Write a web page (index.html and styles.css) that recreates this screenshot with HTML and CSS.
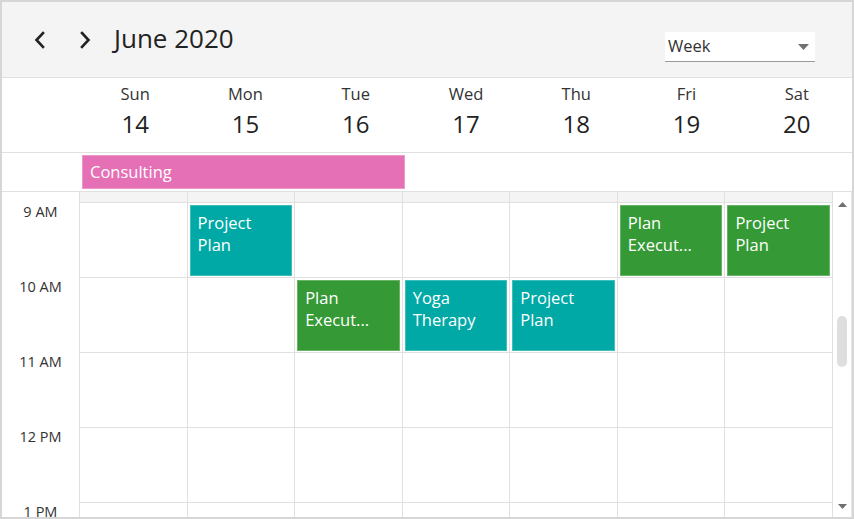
FILE: index.html
```html
<!DOCTYPE html>
<html>
<head>
<meta charset="utf-8">
<link rel="stylesheet" href="styles.css">
</head>
<body>
<div class="scheduler">
  <div class="toolbar">
    <button class="nav prev" aria-label="Previous">
      <svg width="14" height="18" viewBox="0 0 14 18"><path d="M10 2 L3.5 9 L10 16" fill="none" stroke="#222" stroke-width="2.6" stroke-linecap="square"/></svg>
    </button>
    <button class="nav next" aria-label="Next">
      <svg width="14" height="18" viewBox="0 0 14 18"><path d="M4 2 L10.5 9 L4 16" fill="none" stroke="#222" stroke-width="2.6" stroke-linecap="square"/></svg>
    </button>
    <div class="title">June 2020</div>
    <div class="spacer"></div>
    <div class="select">
      <span>Week</span>
      <svg class="caret" width="12" height="7" viewBox="0 0 12 7"><path d="M0 0 H11 L5.5 6 Z" fill="#707070"/></svg>
    </div>
  </div>

  <div class="dayhead">
    <div class="day"><div class="dname">Sun</div><div class="dnum">14</div></div>
    <div class="day"><div class="dname">Mon</div><div class="dnum">15</div></div>
    <div class="day"><div class="dname">Tue</div><div class="dnum">16</div></div>
    <div class="day"><div class="dname">Wed</div><div class="dnum">17</div></div>
    <div class="day"><div class="dname">Thu</div><div class="dnum">18</div></div>
    <div class="day"><div class="dname">Fri</div><div class="dnum">19</div></div>
    <div class="day"><div class="dname">Sat</div><div class="dnum">20</div></div>
  </div>

  <div class="allday">
    <div class="allday-event">Consulting</div>
  </div>

  <div class="body">
    <div class="times">
      <div class="strip-t"></div>
      <div class="tlabel">9 AM</div>
      <div class="tlabel">10 AM</div>
      <div class="tlabel">11 AM</div>
      <div class="tlabel">12 PM</div>
      <div class="tlabel">1 PM</div>
    </div>
    <div class="grid">
      <div class="cell strip"></div><div class="cell strip"></div><div class="cell strip"></div><div class="cell strip"></div><div class="cell strip"></div><div class="cell strip"></div><div class="cell strip"></div>

      <div class="cell"></div>
      <div class="cell"><div class="ev teal">Project<br>Plan</div></div>
      <div class="cell"></div>
      <div class="cell"></div>
      <div class="cell"></div>
      <div class="cell"><div class="ev green">Plan<br>Execut...</div></div>
      <div class="cell"><div class="ev green">Project<br>Plan</div></div>

      <div class="cell"></div>
      <div class="cell"></div>
      <div class="cell"><div class="ev green">Plan<br>Execut...</div></div>
      <div class="cell"><div class="ev teal">Yoga<br>Therapy</div></div>
      <div class="cell"><div class="ev teal">Project<br>Plan</div></div>
      <div class="cell"></div>
      <div class="cell"></div>

      <div class="cell"></div><div class="cell"></div><div class="cell"></div><div class="cell"></div><div class="cell"></div><div class="cell"></div><div class="cell"></div>
      <div class="cell"></div><div class="cell"></div><div class="cell"></div><div class="cell"></div><div class="cell"></div><div class="cell"></div><div class="cell"></div>
      <div class="cell"></div><div class="cell"></div><div class="cell"></div><div class="cell"></div><div class="cell"></div><div class="cell"></div><div class="cell"></div>
    </div>
    <div class="scroll">
      <svg class="arrow" width="9" height="5" viewBox="0 0 9 5"><path d="M0 5 L4.5 0 L9 5 Z" fill="#707070"/></svg>
      <div class="track"><div class="thumb"></div></div>
      <svg class="arrow" width="9" height="5" viewBox="0 0 9 5"><path d="M0 0 L9 0 L4.5 5 Z" fill="#707070"/></svg>
    </div>
  </div>
</div>
</body>
</html>
```

FILE: styles.css
```css
* { box-sizing: border-box; }
html, body { margin: 0; padding: 0; background: #fff; }
body {
  font-family: "Open Sans", "Noto Sans", "DejaVu Sans", sans-serif;
  color: #212121;
}
.scheduler {
  width: 854px;
  height: 519px;
  border: 2px solid #d6d6d6;
  display: flex;
  flex-direction: column;
  overflow: hidden;
  background: #fff;
}
.toolbar {
  height: 76px;
  flex: none;
  background: #f4f4f4;
  border-bottom: 1px solid #e0e0e0;
  display: flex;
  align-items: center;
  padding: 0 37px 0 31px;
}
.nav {
  border: 0;
  background: none;
  padding: 0;
  width: 14px;
  height: 18px;
  display: flex;
  margin-top: 1px;
}
.nav.next { margin-left: 31px; }
.title {
  margin-left: 22px;
  font-size: 26px;
  line-height: 32px;
  margin-bottom: 3px;
  color: #222;
}
.spacer { flex: 1; }
.select {
  width: 150px;
  height: 30px;
  margin-top: 15px;
  background: #fff;
  border-bottom: 1px solid #9a9a9a;
  display: flex;
  align-items: center;
  padding: 0 5px 0 3px;
  font-size: 16.5px;
  color: #333;
}
.select span { flex: 1; margin-top: -2px; }
.caret { margin-top: 1px; }

.dayhead {
  height: 75px;
  flex: none;
  border-bottom: 1px solid #e0e0e0;
  display: flex;
  padding-left: 78px;
}
.day { flex: 1; text-align: center; }
.dname { font-size: 16.5px; line-height: 22px; margin-top: 5px; color: #333; }
.dnum { font-size: 24px; line-height: 32px; margin-top: 3px; color: #222; }

.allday {
  height: 39px;
  flex: none;
  border-bottom: 1px solid #e0e0e0;
  padding: 2px 0 0 80px;
}
.allday-event {
  width: 323px;
  height: 34px;
  background: #e670b6;
  border: 1px solid #ee98cb;
  color: #fff;
  font-size: 16.5px;
  line-height: 32px;
  padding-left: 7px;
}

.body {
  flex: 1;
  display: flex;
  overflow: hidden;
}
.times {
  width: 78px;
  flex: none;
  border-right: 1px solid #e0e0e0;
}
.strip-t { height: 11px; }
.tlabel {
  height: 75px;
  text-align: center;
  font-size: 14.5px;
  line-height: 18px;
  color: #333;
}
.grid {
  flex: 1;
  display: grid;
  grid-template-columns: repeat(7, 1fr);
  grid-template-rows: 11px repeat(5, 75px);
  align-content: start;
}
.cell {
  border-right: 1px solid #e0e0e0;
  border-bottom: 1px solid #e0e0e0;
  padding: 2px 2px 1px 2px;
  min-width: 0;
}
.cell.strip { background: #f4f4f4; padding: 0; }
.ev {
  height: 100%;
  color: #fff;
  font-size: 16.5px;
  line-height: 22px;
  padding: 6px 0 0 7px;
  border: 1px solid rgba(255,255,255,0.25);
  white-space: nowrap;
  overflow: hidden;
}
.teal { background: #00a9a6; }
.green { background: #359a35; }

.scroll {
  width: 19px;
  flex: none;
  border-right: 1px solid #e8e8e8;
  display: flex;
  flex-direction: column;
  align-items: center;
  padding: 10px 0 8px 0;
}
.track {
  flex: 1;
  width: 100%;
  display: flex;
  justify-content: center;
  padding-top: 109px;
}
.thumb {
  width: 10px;
  height: 51px;
  border-radius: 5px;
  background: #dedede;
}
```
